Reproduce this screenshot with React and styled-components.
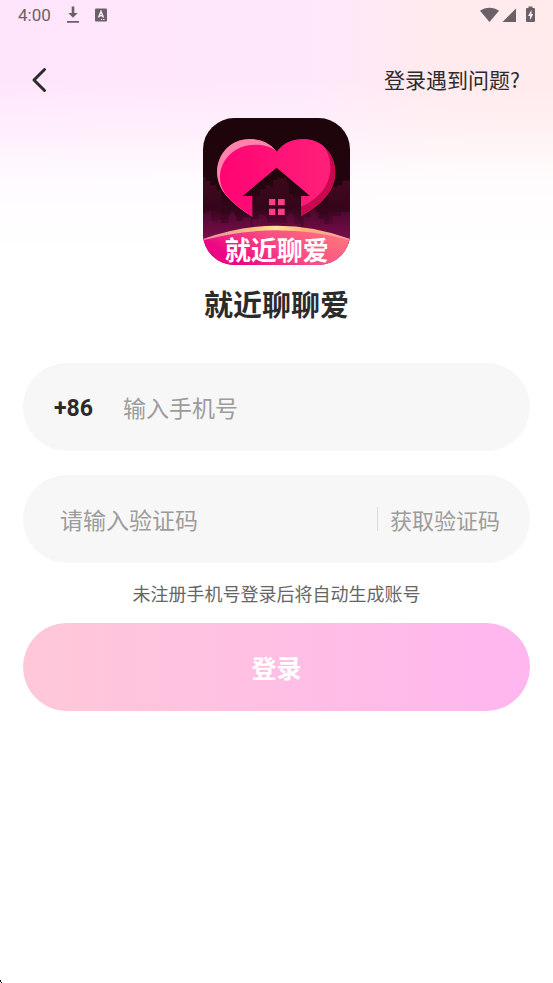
import React, { useState } from "react";
import styled, { createGlobalStyle } from "styled-components";

const App = () => {
  const [phone, setPhone] = useState("");
  const [code, setCode] = useState("");

  return (
    <>
      <GlobalStyle />
      <Page>
        <StatusBar>
          <StatusGroup>
            <Clock>4:00</Clock>
            <DownloadIcon />
            <KeyboardIcon />
          </StatusGroup>
          <StatusIcons />
        </StatusBar>
        <Header>
          <BackButton type="button" aria-label="返回">
            <svg width="16" height="26" viewBox="0 0 16 26" fill="none">
              <path
                d="M13.5 2.5 3 13l10.500 10.500"
                stroke="#2b2b2b"
                strokeWidth="3"
                strokeLinecap="round"
                strokeLinejoin="round"
              />
            </svg>
          </BackButton>
          <HelpLink href="#help">登录遇到问题?</HelpLink>
        </Header>
        <Brand>
          <AppLogo />
          <Title>就近聊聊爱</Title>
        </Brand>
        <Form onSubmit={(e) => e.preventDefault()}>
          <Field $left={31}>
            <Prefix htmlFor="phone">+86</Prefix>
            <Input
              id="phone"
              type="tel"
              placeholder="输入手机号"
              value={phone}
              onChange={(e) => setPhone(e.target.value)}
            />
          </Field>
          <Field $left={37}>
            <Input
              aria-label="验证码"
              inputMode="numeric"
              placeholder="请输入验证码"
              value={code}
              onChange={(e) => setCode(e.target.value)}
            />
            <CodeButton type="button">获取验证码</CodeButton>
          </Field>
          <Hint>未注册手机号登录后将自动生成账号</Hint>
          <LoginButton type="submit">登录</LoginButton>
        </Form>
        <CornerMark viewBox="0 0 2 3" aria-hidden="true">
          <path d="M0 0h1v2h1v1H1V2H0z" fill="#111" />
        </CornerMark>
      </Page>
    </>
  );
};

const DownloadIcon = () => (
  <svg width="14" height="18" viewBox="0 0 14 18" fill="#6b6067">
    <path d="M5.700 0.500h2.600v6.500h3.400L7 11.800 2.300 7h3.400zM1 15h12v1.800H1z" />
  </svg>
);

const KeyboardIcon = () => (
  <svg width="12" height="14" viewBox="0 0 12 14">
    <rect y="0.500" width="12" height="13" rx="1" fill="#6b6067" />
    <path
      d="M3.500 9.500 6 3.500l2.500 6M4.300 7.700h3.400"
      fill="none"
      stroke="#fde8fb"
      strokeWidth="1.500"
    />
    <path d="M6 11h1.200v1H6zM8.200 11h1.200v1H8.200z" fill="#fde8fb" />
  </svg>
);

const StatusIcons = () => (
  <svg width="56" height="18" viewBox="0 0 56 18" fill="#6b6067">
    <path d="M0 4.800C5.500.600 13.500.600 19 4.800L9.500 16z" />
    <path d="M36 2.500V16H22.500z" />
    <path
      fillRule="evenodd"
      d="M48.500.500h4v1.500H54q1 0 1 1V15q0 1-1 1h-7q-1 0-1-1V3q0-1 1-1h1.500zM51.500 4 48 10h2v4l3.300-6h-1.800z"
    />
  </svg>
);

const AppLogo = () => (
  <Logo viewBox="24 24 441 441" role="img" aria-label="就近聊爱">
    <defs>
      <clipPath id="tile">
        <rect x="24" y="24" width="441" height="441" rx="94" />
      </clipPath>
      <linearGradient
        id="night"
        gradientUnits="userSpaceOnUse"
        x1="0"
        y1="24"
        x2="0"
        y2="400"
      >
        <stop offset="0" stopColor="#1d050a" />
        <stop offset="0.500" stopColor="#21050d" />
        <stop offset="0.750" stopColor="#36051c" />
        <stop offset="1" stopColor="#720b46" />
      </linearGradient>
      <linearGradient
        id="city"
        gradientUnits="userSpaceOnUse"
        x1="0"
        y1="200"
        x2="0"
        y2="390"
      >
        <stop offset="0" stopColor="#430a1f" />
        <stop offset="0.500" stopColor="#35051b" />
        <stop offset="1" stopColor="#780d48" />
      </linearGradient>
      <linearGradient
        id="near"
        gradientUnits="userSpaceOnUse"
        x1="0"
        y1="290"
        x2="0"
        y2="390"
      >
        <stop offset="0" stopColor="#45072a" />
        <stop offset="1" stopColor="#7d0e4c" />
      </linearGradient>
      <linearGradient id="heart" x1="0" y1="0" x2="1" y2="0">
        <stop offset="0" stopColor="#ff0474" />
        <stop offset="1" stopColor="#ff2079" />
      </linearGradient>
      <linearGradient id="ground" x1="0" y1="0.600" x2="1" y2="0.200">
        <stop offset="0.100" stopColor="#ec0784" />
        <stop offset="0.500" stopColor="#f94c83" />
        <stop offset="1" stopColor="#ff7a7d" />
      </linearGradient>
      <linearGradient id="horizon" x1="0" y1="0" x2="1" y2="0">
        <stop offset="0" stopColor="#e98aa9" />
        <stop offset="0.350" stopColor="#f8c184" />
        <stop offset="0.500" stopColor="#ffe39a" />
        <stop offset="0.680" stopColor="#f8b47c" />
        <stop offset="1" stopColor="#ffa0a2" />
      </linearGradient>
      <path
        id="heartShape"
        d="M245 125C222 94 190 87 163 87C107 87 66 133 66 186C66 247 121 287 172 320L245 360L318 320C371 290 422 249 422 186C422 130 379 87 326 87C292 87 265 99 245 125Z"
      />
      <clipPath id="heartClip">
        <use href="#heartShape" />
      </clipPath>
    </defs>
    <g clipPath="url(#tile)">
      <path d="M24 24h441v441H24z" fill="url(#night)" />
      <path
        d="M24 202h8v10h14v14h18v14h14v152H24zM400 230h26v-4h16v-14h23v190h-65z"
        fill="url(#city)"
      />
      <path
        d="M24 310h14v-6h10v30h18v-4h12v10h22v-20l12-18 12 18v14h20v-12h24v66H24zM326 320h18v-12l12-10 14 10v20h18v14h24v-24h26v-12h27v100H326z"
        fill="url(#near)"
      />
      <g clipPath="url(#heartClip)">
        <use href="#heartShape" fill="#c9094f" />
        <path d="M40 60h205v280H40z" fill="#ff82ad" />
        <path
          d="M245 125C229 108 203 104 179 104C121 104 75 148 75 202C75 245 105 277 172 320H318V290C370 268 406 226 406 173C406 147 398 120 378 98L326 60H260Z"
          fill="url(#heart)"
        />
      </g>
      <path d="M245 173 143 258h29v130h146V258h27z" fill="url(#night)" />
      <path
        d="M182 258h12v-20h18v-14h14v8h8v-22h12v-6h28v12h8v36h12v10h18l4-4v100H182z"
        fill="url(#city)"
        opacity="0.750"
      />
      <path
        d="M172 328h20v-14h14l10 10v14h58v-18l12-14 12 14v22h20v38H172z"
        fill="url(#near)"
      />
      <path
        d="M222 267h19v19h-19zM249 267h20v19h-20zM222 296h19v19h-19zM249 296h20v19h-20z"
        fill="#ff3d87"
      />
      <path
        d="M24 388Q135 351 245 351Q360 351 465 388V465H24Z"
        fill="url(#ground)"
      />
      <path
        d="M24 387Q135 347 245 347Q360 347 465 387V391Q360 361 245 361Q135 361 24 391Z"
        fill="url(#horizon)"
      />
    </g>
    <LogoText x="245" y="450" textAnchor="middle">
      就近聊爱
    </LogoText>
  </Logo>
);

const GlobalStyle = createGlobalStyle`
  * {
    box-sizing: border-box;
  }
  body {
    margin: 0;
    background: #fff;
    font-family: "Noto Sans CJK SC", sans-serif;
    color: #2b2b2b;
  }
  button,
  input {
    border: 0;
    background: none;
    padding: 0;
    font-family: inherit;
    outline: none;
  }
  button {
    cursor: pointer;
  }
`;

const Page = styled.div`
  position: relative;
  min-height: 100vh;
  background:
    linear-gradient(
      to bottom,
      rgba(255, 255, 255, 0) 80px,
      rgba(255, 255, 255, 0.35) 130px,
      rgba(255, 255, 255, 0.85) 180px,
      #fff 250px
    ),
    linear-gradient(to right, #ffe5fb 0%, #fee7fb 55%, #ffeaee 78%, #ffeaec 100%);
`;

const StatusBar = styled.div`
  display: flex;
  justify-content: space-between;
  align-items: center;
  height: 30px;
  padding: 0 17px 0 18px;
`;

const StatusGroup = styled.div`
  display: flex;
  align-items: center;
  gap: 15px;
`;

const Clock = styled.span`
  font-family: Roboto, sans-serif;
  font-size: 17px;
  line-height: 20px;
  color: #6b6067;
`;

const Header = styled.header`
  display: flex;
  justify-content: space-between;
  align-items: center;
  height: 88px;
  padding: 12px 33px 0 31px;
`;

const BackButton = styled.button`
  display: flex;
`;

const HelpLink = styled.a`
  padding-bottom: 2px;
  font-size: 21px;
  line-height: 28px;
  color: #2b2b2b;
  text-decoration: none;
`;

const Brand = styled.div`
  display: flex;
  flex-direction: column;
  align-items: center;
`;

const Logo = styled.svg`
  display: block;
  width: 147px;
  height: 147px;
  overflow: visible;
`;

const LogoText = styled.text`
  font-size: 78px;
  font-weight: 700;
  fill: #fff;
`;

const Title = styled.h1`
  margin: 16px 0 0;
  font-size: 29px;
  font-weight: 700;
  line-height: 44px;
`;

const Form = styled.form`
  display: flex;
  flex-direction: column;
  padding: 38px 23px 24px;
`;

const Field = styled.div`
  display: flex;
  align-items: center;
  height: 88px;
  margin-bottom: 24px;
  padding: 0 30px 0 ${({ $left }) => $left}px;
  border-radius: 44px;
  background: #f7f7f7;
  &:nth-of-type(2) {
    margin-bottom: 16px;
  }
`;

const Prefix = styled.label`
  margin-right: 30px;
  padding-top: 4px;
  font-family: Roboto, sans-serif;
  font-size: 23px;
  font-weight: 700;
  line-height: 28px;
`;

const Input = styled.input`
  flex: 1;
  min-width: 0;
  height: 36px;
  font-size: 23px;
  color: #2b2b2b;
  &::placeholder {
    color: #9c9c9c;
    opacity: 1;
  }
`;

const CodeButton = styled.button`
  height: 24px;
  padding-left: 12px;
  border-left: 1px solid #dcdcdc;
  font-size: 22px;
  line-height: 22px;
  color: #9c9c9c;
`;

const Hint = styled.p`
  margin: 0 0 16px;
  font-size: 18px;
  line-height: 28px;
  text-align: center;
  color: #666;
`;

const LoginButton = styled.button`
  height: 88px;
  border-radius: 44px;
  background: linear-gradient(to right, #ffc8d8, #ffb6ef);
  font-size: 25px;
  font-weight: 700;
  color: #fff;
`;

const CornerMark = styled.svg`
  position: absolute;
  left: 0;
  bottom: 0;
  width: 2px;
  height: 3px;
`;

export default App;
